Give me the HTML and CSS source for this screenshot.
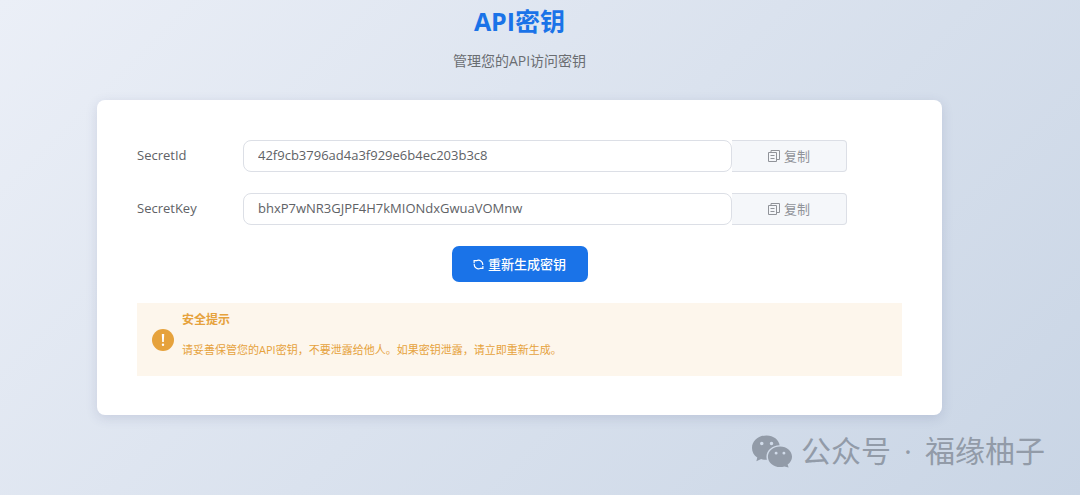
FILE: index.html
```html
<!DOCTYPE html>
<html lang="zh-CN">
<head>
<meta charset="utf-8">
<meta name="viewport" content="width=device-width, initial-scale=1">
<title>API密钥</title>
<link rel="stylesheet" href="styles.css">
</head>
<body>
<svg class="sprite" aria-hidden="true">
  <symbol id="copy" viewBox="0 0 12 12">
    <path d="M.5 2.500h8v9h-8zM3 2.500V.5h8.500v9H8.500M2.500 5.500h4M2.500 8.500h4" fill="none" stroke="currentColor"/>
  </symbol>
</svg>
<main class="page">
  <header class="head">
    <h1 class="title">API密钥</h1>
    <p class="subtitle">管理您的API访问密钥</p>
  </header>
  <section class="card">
    <div class="row">
      <label class="label" for="secret-id">SecretId</label>
      <div class="group">
        <input class="input" id="secret-id" type="text" readonly value="42f9cb3796ad4a3f929e6b4ec203b3c8">
        <button class="copy" type="button"><svg class="copy-icon" aria-hidden="true"><use href="#copy"/></svg>复制</button>
      </div>
    </div>
    <div class="row">
      <label class="label" for="secret-key">SecretKey</label>
      <div class="group">
        <input class="input" id="secret-key" type="text" readonly value="bhxP7wNR3GJPF4H7kMIONdxGwuaVOMnw">
        <button class="copy" type="button"><svg class="copy-icon" aria-hidden="true"><use href="#copy"/></svg>复制</button>
      </div>
    </div>
    <button class="primary" type="button">
      <svg class="refresh-icon" viewBox="0 0 12 12" aria-hidden="true">
        <path d="M3.800 1.900A4.600 4.600 0 0 1 10.600 6.500M8.200 10.100A4.600 4.600 0 0 1 1.400 5.500M1.200 4.500V1.700H4M10.800 7.500v2.800H8" fill="none" stroke="currentColor" stroke-width="1.300"/>
      </svg>重新生成密钥
    </button>
    <div class="alert" role="alert">
      <svg class="alert-icon" viewBox="0 0 22 22" aria-hidden="true">
        <circle cx="11" cy="11" r="11" fill="#e6a23c"/>
        <path d="M9.800 5h2.400l-.4 8h-1.600z" fill="#fff"/>
        <circle cx="11" cy="15.800" r="1.200" fill="#fff"/>
      </svg>
      <div class="alert-body">
        <strong class="alert-title">安全提示</strong>
        <p class="alert-text">请妥善保管您的API密钥，不要泄露给他人。如果密钥泄露，请立即重新生成。</p>
      </div>
    </div>
  </section>
</main>
<div class="watermark">
  <svg class="wechat" viewBox="0 0 42 33" aria-hidden="true">
    <path fill="currentColor" fill-rule="evenodd" d="M15 0C6.500 0 0 5.600 0 12.800c0 4 2 7.500 5.400 9.900L4.500 26.500l4.800-2.300c2 .6 3.300.9 6 .8-.3-1-.5-2-.5-3 0-6.600 6-11.900 13.500-11.900C27.500 4.300 22 0 15 0zM10 6.500a1.800 1.800 0 1 1 0 3.600 1.800 1.800 0 0 1 0-3.600zm10 0a1.800 1.800 0 1 1 0 3.600 1.800 1.800 0 0 1 0-3.600z"/>
    <path fill="currentColor" fill-rule="evenodd" d="M28.800 11.300c-7 0-12.500 4.800-12.500 10.600s5.500 10.600 12.500 10.600c1.600 0 3-.3 4.400-.7l4.300 1.200-1-3.200c2.800-1.900 4.500-4.700 4.500-7.900 0-5.800-5.400-10.600-12.200-10.600zM24.700 16.700a1.500 1.500 0 1 1 0 3 1.500 1.500 0 0 1 0-3zm8 0a1.500 1.500 0 1 1 0 3 1.500 1.500 0 0 1 0-3z"/>
  </svg>
  <div class="watermark-text">
    <span>公众号</span>
    <span>·</span>
    <span>福缘柚子</span>
  </div>
</div>
</body>
</html>
```
FILE: styles.css
```css
* {
  box-sizing: border-box;
}

body {
  margin: 0;
  min-height: 100vh;
  font-family: "Open Sans", "Noto Sans CJK SC", sans-serif;
  font-size: 13px;
  color: #606266;
  background: linear-gradient(135deg, #ebeff7 0%, #c9d5e5 100%);
}

button,
input {
  font: inherit;
}

.sprite {
  position: absolute;
  width: 0;
  height: 0;
}

.page {
  padding: 3px 138px 79px 97px;
}

.head {
  text-align: center;
}

.title {
  margin: 0;
  font-size: 25px;
  line-height: 36px;
  color: #1a73e8;
}

.subtitle {
  margin: 12px 0 0;
  font-size: 14px;
  line-height: 20px;
  color: #6a6d72;
}

.card {
  display: flex;
  flex-direction: column;
  gap: 21px;
  margin-top: 29px;
  padding: 40px 40px 39px;
  background: #fff;
  border-radius: 8px;
  box-shadow: 0 3px 12px rgba(60, 70, 120, 0.15);
}

.row {
  display: flex;
  align-items: center;
  padding-right: 55px;
}

.label {
  width: 106px;
  line-height: 30px;
  padding-bottom: 2px;
}

.group {
  display: flex;
  flex: 1;
}

.input {
  flex: 1;
  min-width: 0;
  height: 32px;
  padding: 0 14px 2px;
  color: #606266;
  background: #fff;
  border: 1px solid #dcdfe6;
  border-radius: 8px;
}

.copy {
  display: flex;
  align-items: center;
  justify-content: center;
  gap: 4px;
  width: 115px;
  padding: 0;
  line-height: 16px;
  color: #909399;
  background: #f5f7fa;
  border: 1px solid #dcdfe6;
  border-left: 0;
  border-radius: 0 4px 4px 0;
}

.copy-icon {
  width: 12px;
  height: 12px;
}

.primary {
  display: flex;
  align-items: center;
  align-self: center;
  justify-content: center;
  gap: 4px;
  width: 136px;
  height: 36px;
  padding: 0;
  font-weight: 500;
  line-height: 16px;
  color: #fff;
  background: #1a73e8;
  border: 0;
  border-radius: 7px;
}

.refresh-icon {
  width: 11px;
  height: 11px;
}

.alert {
  display: flex;
  align-items: center;
  gap: 8px;
  padding: 8px 15px;
  color: #e6a23c;
  background: #fdf6ec;
}

.alert-icon {
  flex: none;
  width: 22px;
  height: 22px;
}

.alert-body {
  padding-bottom: 9px;
}

.alert-title {
  display: block;
  font-size: 12px;
  line-height: 18px;
}

.alert-text {
  margin: 12px 0 0;
  font-size: 11px;
  line-height: 18px;
}

.watermark {
  position: absolute;
  right: 35px;
  bottom: 22px;
  display: flex;
  align-items: center;
  gap: 8px;
  font-size: 30px;
  line-height: 44px;
  color: #929ba8;
}

.watermark-text {
  display: flex;
  gap: 13px;
}

.wechat {
  width: 41px;
  height: 33px;
}
```
